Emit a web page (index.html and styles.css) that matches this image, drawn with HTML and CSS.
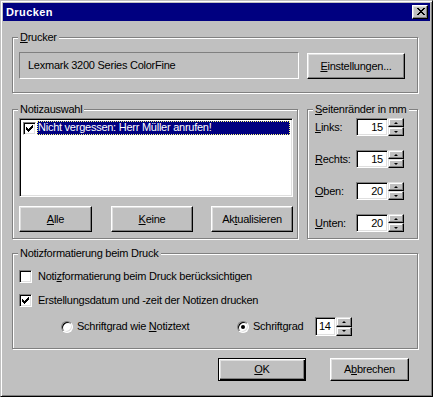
FILE: index.html
```html
<!DOCTYPE html>
<html lang="de">
<head>
<meta charset="utf-8">
<title>Drucken</title>
<link rel="stylesheet" href="styles.css">
</head>
<body>
<div class="window">
  <div class="titlebar">
    <span class="title">Drucken</span>
    <span class="close">
      <svg width="8" height="7" viewBox="0 0 8 7" shape-rendering="crispEdges"><path d="M0 0h2v1H0zM6 0h2v1H6zM1 1h2v1H1zM5 1h2v1H5zM2 2h4v1H2zM3 3h2v1H3zM2 4h4v1H2zM1 5h2v1H1zM5 5h2v1H5zM0 6h2v1H0zM6 6h2v1H6z" fill="#000"/></svg>
    </span>
  </div>
  <div class="client">
    <div class="group g-printer">
      <span class="group-label"><u>D</u>rucker</span>
      <div class="printer-row">
        <div class="static-field">Lexmark 3200 Series ColorFine</div>
        <span class="btn btn-settings"><u>E</u>instellungen...</span>
      </div>
    </div>

    <div class="mid-row">
      <div class="group g-notes">
        <span class="group-label">Notizauswahl</span>
        <div class="listbox">
          <div class="list-item">
            <span class="lv-check"><svg width="7" height="7" viewBox="0 0 7 7" shape-rendering="crispEdges"><path d="M0 2h1v3H0zM1 3h1v3H1zM2 4h1v3H2zM3 3h1v3H3zM4 2h1v3H4zM5 1h1v3H5zM6 0h1v3H6z" fill="#000"/></svg></span>
            <span class="item-text">Nicht vergessen: Herr Müller anrufen!</span>
          </div>
        </div>
        <div class="btn-row">
          <span class="btn btn-alle"><u>A</u>lle</span>
          <span class="btn btn-keine"><u>K</u>eine</span>
          <span class="btn btn-akt">Ak<u>t</u>ualisieren</span>
        </div>
      </div>

      <div class="group g-margins">
        <span class="group-label"><u>S</u>eitenränder in mm</span>
        <div class="margin-row">
          <span class="margin-label"><u>L</u>inks:</span>
          <span class="edit">15</span>
          <span class="spin"><span class="spin-btn"><i class="arr-up"></i></span><span class="spin-btn"><i class="arr-down"></i></span></span>
        </div>
        <div class="margin-row">
          <span class="margin-label"><u>R</u>echts:</span>
          <span class="edit">15</span>
          <span class="spin"><span class="spin-btn"><i class="arr-up"></i></span><span class="spin-btn"><i class="arr-down"></i></span></span>
        </div>
        <div class="margin-row">
          <span class="margin-label"><u>O</u>ben:</span>
          <span class="edit">20</span>
          <span class="spin"><span class="spin-btn"><i class="arr-up"></i></span><span class="spin-btn"><i class="arr-down"></i></span></span>
        </div>
        <div class="margin-row">
          <span class="margin-label"><u>U</u>nten:</span>
          <span class="edit">20</span>
          <span class="spin"><span class="spin-btn"><i class="arr-up"></i></span><span class="spin-btn"><i class="arr-down"></i></span></span>
        </div>
      </div>
    </div>

    <div class="group g-format">
      <span class="group-label">Notizformatierung beim Druck</span>
      <div class="check-row">
        <span class="checkbox"></span>
        <span class="check-text">Noti<u>z</u>formatierung beim Druck berücksichtigen</span>
      </div>
      <div class="check-row">
        <span class="checkbox"><svg width="7" height="7" viewBox="0 0 7 7" shape-rendering="crispEdges"><path d="M0 2h1v3H0zM1 3h1v3H1zM2 4h1v3H2zM3 3h1v3H3zM4 2h1v3H4zM5 1h1v3H5zM6 0h1v3H6z" fill="#000"/></svg></span>
        <span class="check-text">Erstellungsdatum und -zeit der Notizen drucken</span>
      </div>
      <div class="radio-row">
        <span class="radio"></span>
        <span class="radio-text r1">Schriftgrad wie <u>N</u>otiztext</span>
        <span class="radio checked"><i class="dot"></i></span>
        <span class="radio-text r2">Schriftgrad</span>
        <span class="edit edit-size">14</span>
        <span class="spin"><span class="spin-btn"><i class="arr-up"></i></span><span class="spin-btn"><i class="arr-down"></i></span></span>
      </div>
    </div>

    <div class="footer">
      <span class="btn btn-ok"><u>O</u>K</span>
      <span class="btn btn-cancel">A<u>b</u>brechen</span>
    </div>
  </div>
</div>
</body>
</html>
```
FILE: styles.css
```css
* { box-sizing: border-box; }

html, body {
  margin: 0;
  padding: 0;
  background: #c0c0c0;
}

body {
  font-family: "Liberation Sans", Arial, sans-serif;
  font-size: 11px;
  line-height: 13px;
  letter-spacing: -0.25px;
  color: #000;
}

u { text-decoration: underline; text-underline-offset: 1px; }

.window {
  width: 433px;
  height: 397px;
  background: #c0c0c0;
  border: 1px solid;
  border-color: #c0c0c0 #000 #000 #c0c0c0;
  box-shadow: inset 1px 1px 0 #fff, inset -1px -1px 0 #808080;
  padding: 2px;
}

.titlebar {
  height: 18px;
  background: #000080;
  display: flex;
  align-items: center;
  padding-left: 3px;
}

.title {
  color: #fff;
  font-weight: bold;
  font-size: 11px;
  letter-spacing: 0.4px;
}

.close {
  margin-left: auto;
  margin-right: 2px;
  width: 16px;
  height: 14px;
  background: #c0c0c0;
  border: 1px solid;
  border-color: #fff #000 #000 #fff;
  box-shadow: inset -1px -1px 0 #808080, inset 1px 1px 0 #dfdfdf;
  display: flex;
  align-items: center;
  justify-content: center;
  padding-left: 1px;
  padding-bottom: 1px;
}
.close svg { display: block; }

.client {
  padding: 16px 12px 0 9px;
}

.group {
  position: relative;
  border: 1px solid #808080;
  box-shadow: 1px 1px 0 #fff, inset 1px 1px 0 #fff;
}

.group-label {
  position: absolute;
  top: -7px;
  left: 5px;
  background: #c0c0c0;
  padding: 0 2px;
  line-height: 13px;
  white-space: nowrap;
}

/* generic win98 button */
.btn {
  display: flex;
  align-items: center;
  justify-content: center;
  background: #c0c0c0;
  border: 1px solid;
  border-color: #fff #000 #000 #fff;
  box-shadow: inset -1px -1px 0 #808080, inset 1px 1px 0 #dfdfdf;
  white-space: nowrap;
}

/* Drucker group */
.g-printer {
  height: 56px;
  padding: 14px 0 0 6px;
}
.printer-row {
  display: flex;
  align-items: flex-start;
}
.static-field {
  width: 280px;
  height: 27px;
  border: 1px solid;
  border-color: #808080 #fff #fff #808080;
  display: flex;
  align-items: center;
  padding-left: 8px;
  padding-bottom: 1px;
}
.btn-settings {
  margin-left: 8px;
  margin-top: 1px;
  width: 98px;
  height: 26px;
}

/* middle row */
.mid-row {
  margin-top: 16px;
  display: flex;
  gap: 9px;
}
.g-notes {
  width: 286px;
  height: 130px;
  padding: 8px 0 0 6px;
}
.listbox {
  width: 274px;
  height: 79px;
  background: #fff;
  border: 1px solid;
  border-color: #808080 #fff #fff #808080;
  box-shadow: inset 1px 1px 0 #000, inset -1px -1px 0 #dfdfdf;
  padding: 2px 2px 0 2px;
}
.list-item {
  display: flex;
  align-items: center;
  height: 14px;
}
.lv-check {
  width: 13px;
  height: 13px;
  margin-left: 1px;
  margin-right: 1px;
  background: #fff;
  border: 1px solid;
  border-color: #808080 #fff #fff #808080;
  box-shadow: inset 1px 1px 0 #000, inset -1px -1px 0 #dfdfdf;
  display: flex;
  align-items: center;
  justify-content: center;
}
.lv-check svg, .checkbox svg { display: block; }
.item-text {
  flex: 1;
  height: 14px;
  background: #000080;
  color: #fff;
  padding-left: 1px;
  outline: 1px dotted #ffff80;
  outline-offset: -1px;
  line-height: 13px;
}
.btn-row {
  display: flex;
  margin-top: 9px;
}
.btn-alle { width: 73px; height: 26px; }
.btn-keine { width: 82px; height: 26px; margin-left: 19px; }
.btn-akt { width: 82px; height: 26px; margin-left: 18px; }

.g-margins {
  width: 111px;
  height: 130px;
  padding: 8px 0 0 7px;
}
.margin-row {
  display: flex;
  align-items: center;
  height: 18px;
  margin-bottom: 14px;
}
.margin-label {
  width: 41px;
}
.edit {
  width: 32px;
  height: 18px;
  background: #fff;
  border: 1px solid;
  border-color: #808080 #fff #fff #808080;
  box-shadow: inset 1px 1px 0 #000, inset -1px -1px 0 #dfdfdf;
  display: flex;
  align-items: center;
  justify-content: flex-end;
  padding-right: 4px;
}
.spin {
  width: 16px;
  height: 18px;
  display: flex;
  flex-direction: column;
}
.spin-btn {
  flex: 1;
  background: #c0c0c0;
  border: 1px solid;
  border-color: #dfdfdf #000 #000 #dfdfdf;
  box-shadow: inset -1px -1px 0 #808080, inset 1px 1px 0 #fff;
  display: flex;
  align-items: center;
  justify-content: center;
}
.arr-up, .arr-down {
  display: block;
  width: 0;
  height: 0;
  border-left: 2px solid transparent;
  border-right: 2px solid transparent;
}
.arr-up { border-bottom: 2px solid #000; }
.arr-down { border-top: 2px solid #000; }

/* format group */
.g-format {
  margin-top: 14px;
  width: 406px;
  height: 96px;
  padding: 16px 0 0 6px;
}
.check-row {
  display: flex;
  align-items: center;
  height: 13px;
  margin-bottom: 11px;
}
.checkbox {
  width: 13px;
  height: 13px;
  background: #fff;
  border: 1px solid;
  border-color: #808080 #fff #fff #808080;
  box-shadow: inset 1px 1px 0 #000, inset -1px -1px 0 #dfdfdf;
  display: flex;
  align-items: center;
  justify-content: center;
}
.check-text { margin-left: 6px; }
.radio-row {
  display: flex;
  align-items: center;
  height: 19px;
  margin-top: -1px;
}
.radio {
  width: 12px;
  height: 12px;
  border-radius: 50%;
  background: #fff;
  border: 1px solid;
  border-color: #808080 #fff #fff #808080;
  box-shadow: inset 1px 1px 0 #000, inset -1px -1px 0 #dfdfdf;
  display: flex;
  align-items: center;
  justify-content: center;
}
.radio:first-child { margin-left: 42px; }
.dot {
  display: block;
  width: 4px;
  height: 4px;
  border-radius: 50%;
  background: #000;
}
.radio-text { margin-left: 4px; }
.r1 { width: 160px; }
.r2 { width: 62px; }
.edit-size {
  width: 21px;
  height: 19px;
  justify-content: flex-start;
  padding-left: 3px;
  padding-right: 0;
}
.radio-row .spin { height: 19px; }

.footer {
  display: flex;
  justify-content: flex-end;
  margin-top: 9px;
  padding-right: 9px;
}
.btn-ok {
  width: 88px;
  height: 23px;
  border: 1px solid #000;
  box-shadow: inset 1px 1px 0 #fff, inset -1px -1px 0 #000, inset -2px -2px 0 #808080, inset 2px 2px 0 #dfdfdf;
}
.btn-cancel {
  width: 79px;
  height: 23px;
  margin-left: 24px;
}
```
